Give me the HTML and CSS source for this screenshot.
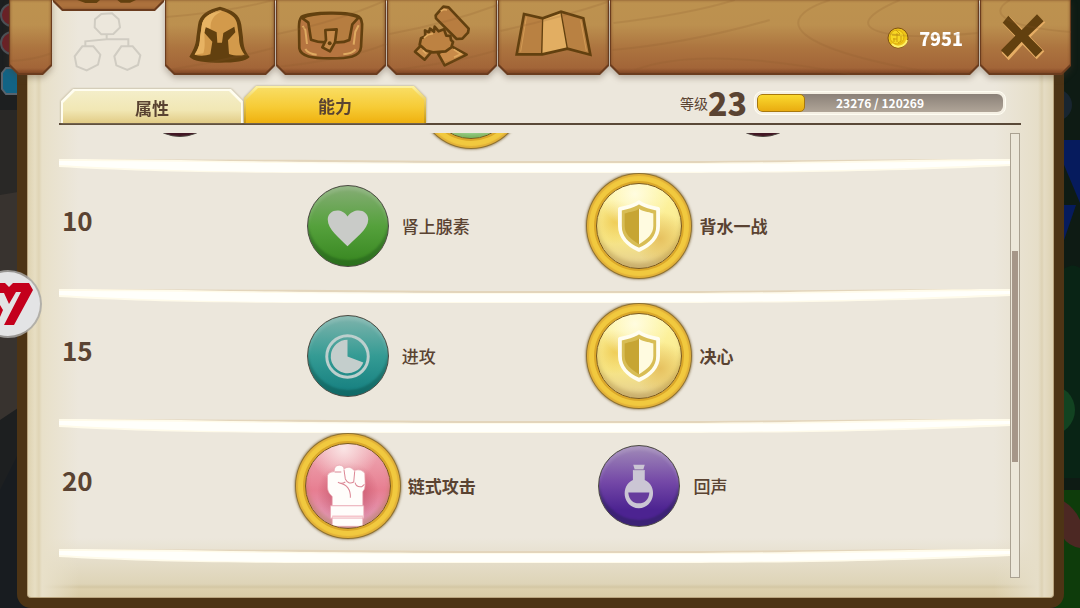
FILE: index.html
```html
<!DOCTYPE html>
<html lang="zh-CN">
<head>
    <meta charset="UTF-8">
    <meta name="viewport" content="width=device-width, initial-scale=1.0">
    <title>能力</title>
    <link rel="stylesheet" href="styles.css">
</head>
<body>

    <!-- Shared symbols -->
    <svg class="symbols" aria-hidden="true">
        <symbol id="ribbon" viewBox="0 0 952 16" preserveAspectRatio="none">
            <path d="M0 1C200 1 240 2 400 3H650C780 2 860 1 952 1" fill="none" stroke="#e3d5bb" stroke-width="2"/>
            <path d="M0 0C120 0 220 4 400 4H640C780 3 860 0 952 0V7C840 12 740 14 600 14H260C150 14 70 12 0 8Z" fill="#fffbea"/>
            <path d="M0 2C120 2 220 5 400 5H640C780 5 860 2 952 2V5C840 10 740 13 600 13H260C150 13 70 10 0 6Z" fill="#fffffb"/>
        </symbol>
        <symbol id="shield" viewBox="0 0 44 54">
            <path d="M22 2C16 7 9 7 2 9V27C2 38 10 47 22 52C34 47 42 38 42 27V9C35 7 28 7 22 2Z" fill="#d8bd55" stroke="#fffdf0" stroke-width="4" stroke-linejoin="round"/>
            <path d="M22 9C18 12 13 12 7 14V27C7 35 13 41 22 46Z" fill="#c7a533"/>
            <path d="M22 9C26 12 31 12 37 14V27C37 35 31 41 22 46Z" fill="#fffbe0"/>
        </symbol>
    </svg>

    <svg class="scene" viewBox="0 0 1080 608" preserveAspectRatio="none" aria-hidden="true">
        <rect width="1080" height="608" fill="#1d1f20"/>
        <path d="M0 110H30V195L0 200Z" fill="#292826"/>
        <path d="M0 195L30 190V400L0 420Z" fill="#38332f"/>
        <path d="M0 490L30 430V608H0Z" fill="#181c20"/>
        <circle cx="12" cy="15" r="11" fill="#6b2026" stroke="#4c5056" stroke-width="2"/>
        <circle cx="12" cy="43" r="11" fill="#6b2026" stroke="#4c5056" stroke-width="2"/>
        <path d="M6 68H24V94H6L2 89V73Z" fill="#126384" stroke="#59636d" stroke-width="2"/>
        <path d="M1055 0H1080V608H1055Z" fill="#0e1b14"/>
        <path d="M1062 140H1080V203L1062 160Z" fill="#061b5d"/>
        <path d="M1062 205H1076L1062 246Z" fill="#061b5d"/>
        <circle cx="1056" cy="105" r="16" fill="#182530"/>
        <path d="M1062 270Q1073 262 1080 268V478H1062Z" fill="#092415"/>
        <circle cx="1050" cy="410" r="25" fill="#124321"/>
        <path d="M1055 490H1080V608H1055Z" fill="#0e3c0b"/>
        <path d="M1062 500Q1075 508 1080 520V548Q1068 546 1062 536Z" fill="#4c2823"/>
    </svg>

    <div class="window">
        <nav class="planks" aria-label="菜单">
            <div class="plank plank-edge"></div>
            <div class="plank plank-active">
                <button type="button" aria-label="技能" aria-current="page">
                    <svg viewBox="159 0 333 225">
                        <path d="M232 0L256 9H290L300 0ZM352 0L362 8H390L408 0Z" fill="#62400f"/>
                        <g fill="none" stroke="#d0ccc2" stroke-width="6">
                            <path d="M304 42L336 40L356 58L360 82L340 102L304 103L284 82L285 58Z"/>
                            <path d="M247 139L280 139L301 164L294 194L260 211L230 199L224 169Z"/>
                            <path d="M364 139L398 139L421 166L414 195L382 210L349 196L343 169Z"/>
                            <path d="M320 104V120M256 138V124L320 118L385 118V138"/>
                        </g>
                    </svg>
                </button>
            </div>
            <div class="plank">
                <button type="button" aria-label="装备">
                    <svg viewBox="495 0 330 225">
                        <path d="M660 20C625 28 597 44 594 75L589 112C588 138 577 155 568 170C580 184 617 188 661 188C704 188 738 185 749 171C735 155 730 139 729 112L724 74C720 43 696 29 660 20Z" fill="#62400f"/>
                        <path d="M660 31C629 39 607 53 605 79L600 113C600 138 591 151 584 164C600 169 618 167 631 163L637 125L613 98L617 81L650 97L652 128H666L670 99L703 80L706 97L684 121L687 162C705 168 722 168 734 164C722 149 717 133 717 112L712 76C709 51 690 39 660 31Z" fill="#d39a4b"/>
                        <path d="M660 31C629 39 607 53 605 79L600 113C600 138 591 151 584 164L610 160C617 139 613 119 613 98L617 81L632 86C630 63 641 43 668 34Z" fill="#e7b363"/>
                    </svg>
                </button>
            </div>
            <div class="plank">
                <button type="button" aria-label="背包">
                    <svg viewBox="18 0 330 225">
                        <g stroke="#62400f" stroke-width="8" stroke-linejoin="round">
                            <path d="M94 51C121 35 239 34 266 50Q278 59 276 83L273 141C271 171 235 175 180 175C127 175 92 170 88 145L87 80Q87 60 94 51Z" fill="#b67540"/>
                            <path d="M96 54L115 68L123 119Q151 130 185 126Q218 130 238 120L247 73L266 52Q239 39 181 40Q122 40 96 54Z" fill="#b67d40"/>
                            <path d="M166 90L200 88L195 127L180 154L157 142L168 120Z" fill="#c58a4b"/>
                        </g>
                        <path d="M98 78L106 90L111 132M266 76L256 95L251 134M106 147Q114 161 140 164M257 148Q247 161 220 163" fill="none" stroke="#dfaa60" stroke-width="6"/>
                        <circle cx="179" cy="130" r="6" fill="#62400f"/>
                    </svg>
                </button>
            </div>
            <div class="plank">
                <button type="button" aria-label="制作">
                    <svg viewBox="351 0 330 225">
                        <g stroke="#62400f" stroke-width="8" stroke-linejoin="round">
                            <path d="M454 135L435 155L464 179L489 150Z" fill="#c98f4c"/>
                            <path d="M545 139L590 164L524 196L504 160Z" fill="#c98b49"/>
                            <path d="M494 80L506 94L522 88L529 107L541 108L543 120L549 126L544 142L527 154L489 157L469 152L449 134L453 115L466 109L465 91L477 97L480 86L492 95Z" fill="#bd8242"/>
                            <path d="M520 20L536 22L596 86L594 98L577 116L560 117L498 55L497 46Z" fill="#b87d40"/>
                        </g>
                        <path d="M462 114L474 104L489 101M551 148L573 162L552 172M458 151L469 161M512 34L522 28L531 30" fill="none" stroke="#e0aa60" stroke-width="5"/>
                    </svg>
                </button>
            </div>
            <div class="plank">
                <button type="button" aria-label="地图">
                    <svg viewBox="684 0 333 225">
                        <path d="M762 42L818 55L873 35L940 55L961 164L892 146L817 163L740 163Z" fill="#b98142"/>
                        <path d="M818 55L873 35L892 146L817 163Z" fill="#e2ae62"/>
                        <path d="M762 42L818 55L873 35L940 55L961 164L892 146L817 163L740 163Z" fill="none" stroke="#62400f" stroke-width="8"/>
                        <path d="M818 55L815 163M873 37L892 146" stroke="#62400f" stroke-width="4"/>
                        <path d="M769 52L752 155M932 61L949 153" stroke="#d39b54" stroke-width="3"/>
                    </svg>
                </button>
            </div>
            <div class="plank plank-purse">
                <div class="purse">
                    <svg class="coin" viewBox="0 0 22 24" aria-hidden="true">
                        <circle cx="11" cy="12" r="10" fill="#efc719" stroke="#82530f"/>
                        <path d="M5 18A9 9 0 0 0 20 14" fill="none" stroke="#fff06a" stroke-width="2"/>
                        <circle cx="10" cy="11" r="7" fill="#f7d723" stroke="#dcab10"/>
                        <path d="M9 4L13 8M5 9H13M7 12V16M10 7V16M14 10V15L11 17M6 13H10" fill="none" stroke="#cf9f0e" stroke-width="1"/>
                    </svg>
                    <span>7951</span>
                </div>
            </div>
            <div class="plank plank-close">
                <button type="button" aria-label="关闭">
                    <svg viewBox="1140 0 273 225">
                        <path d="M1228 49L1268 88L1310 46L1336 67L1292 111L1333 154L1310 178L1268 134L1226 181L1205 158L1246 111L1209 71Z" fill="#e6ad64"/>
                        <path d="M1225 47L1265 90L1311 43L1331 64L1285 107L1328 151L1307 171L1265 125L1223 171L1203 151L1246 107L1208 68Z" fill="#62400f"/>
                    </svg>
                </button>
            </div>
            <svg class="grain" viewBox="0 0 1061 75" preserveAspectRatio="none" aria-hidden="true">
                <path d="M2 61Q25 60 43 53M157 17Q220 12 264 0M159 70Q215 61 264 48M268 34Q330 21 377 0M268 67Q340 59 377 44M380 34Q440 23 488 5M385 70Q450 62 488 50M491 31Q550 18 598 2M604 23Q680 14 725 0M603 50Q680 43 760 20M625 70Q690 45 840 74M820 0C760 20 780 49 930 74M890 0C820 30 875 42 968 33M1000 0C975 15 1000 27 1061 32"/>
            </svg>
        </nav>

        <main class="book">
            <header class="book-header">
                <div class="tabs" role="tablist">
                    <button class="tab" type="button" role="tab" aria-selected="false"><span>属性</span></button>
                    <button class="tab tab-selected" type="button" role="tab" aria-selected="true"><span>能力</span></button>
                </div>
                <div class="level">
                    <label class="level-label" for="experience">等级</label>
                    <strong class="level-value">23</strong>
                    <div class="experience">
                        <progress id="experience" value="23276" max="120269"></progress>
                        <span>23276 / 120269</span>
                    </div>
                </div>
            </header>

            <div class="content">
                <div class="ability-list">
                    <section class="row row-three">
                        <button class="ability" type="button" aria-label="能力"><span class="medal maroon"></span></button>
                        <button class="ability chosen" type="button" aria-label="能力"><span class="medal lime"></span></button>
                        <button class="ability" type="button" aria-label="能力"><span class="medal maroon"></span></button>
                    </section>

                    <section class="row">
                        <svg class="ribbon"><use href="#ribbon"/></svg>
                        <h2>10</h2>
                        <button class="ability" type="button">
                            <span class="medal green">
                                <svg viewBox="0 0 81 81">
                                    <path d="M40 61C32 53 20 44 20 34C20 24 34 21 40 31C47 21 61 24 61 34C61 44 48 53 40 61Z" fill="#c9cbc8"/>
                                </svg>
                            </span>
                            <span>肾上腺素</span>
                        </button>
                        <button class="ability chosen" type="button">
                            <span class="medal gold"><svg class="shield"><use href="#shield"/></svg></span>
                            <span>背水一战</span>
                        </button>
                    </section>

                    <section class="row">
                        <svg class="ribbon"><use href="#ribbon"/></svg>
                        <h2>15</h2>
                        <button class="ability" type="button">
                            <span class="medal teal">
                                <svg viewBox="0 0 81 81">
                                    <circle cx="40" cy="41" r="21" fill="none" stroke="#bccfcd" stroke-width="3"/>
                                    <path d="M40 24A17 17 0 1 0 56 47L40 41Z" fill="#c4cecc"/>
                                </svg>
                            </span>
                            <span>进攻</span>
                        </button>
                        <button class="ability chosen" type="button">
                            <span class="medal gold"><svg class="shield"><use href="#shield"/></svg></span>
                            <span>决心</span>
                        </button>
                    </section>

                    <section class="row">
                        <svg class="ribbon"><use href="#ribbon"/></svg>
                        <h2>20</h2>
                        <button class="ability chosen" type="button">
                            <span class="medal pink">
                                <svg viewBox="82 102 250 250">
                                    <g fill="#fffdfb" stroke="#e9a4ae" stroke-width="2">
                                        <path d="M166 184Q165 166 181 165Q194 166 195 176Q213 164 225 181Q248 174 257 190L258 224Q258 237 251 244V286H160V258Q146 247 146 230V195Q151 184 166 184Z"/>
                                        <path d="M155 286H254V323H155ZM160 319H251V347H160Z"/>
                                    </g>
                                    <path d="M167 185H187M195 178L199 206Q208 224 224 215L227 183M228 217Q232 232 248 229L256 222M177 216Q188 222 199 215M181 218Q216 225 214 262" fill="none" stroke="#dc8795" stroke-width="3"/>
                                    <path d="M160 317H252" stroke="#f6c6cc" stroke-width="4"/>
                                </svg>
                            </span>
                            <span>链式攻击</span>
                        </button>
                        <button class="ability" type="button">
                            <span class="medal purple">
                                <svg viewBox="60 78 243 243">
                                    <path d="M164 135H199L195 148V151H199V181C238 197 232 264 181 267C130 264 125 197 163 181V151H168V148Z" fill="#cbc6d4"/>
                                    <path d="M149 219H213C211 242 198 252 181 252C164 252 151 242 149 219Z" fill="#673c9d"/>
                                    <path d="M165 150H197" stroke="#907aaa" stroke-width="3"/>
                                </svg>
                            </span>
                            <span>回声</span>
                        </button>
                    </section>

                    <svg class="ribbon ribbon-last"><use href="#ribbon"/></svg>
                </div>
                <div class="scrollbar"><div class="thumb"></div></div>
            </div>
        </main>
    </div>

    <button class="badge" type="button" aria-label="悬浮球">
        <svg viewBox="0 0 44 72">
            <circle cx="8" cy="36" r="34" fill="#a9a8a5" fill-opacity="0.85"/>
            <circle cx="8" cy="36" r="32" fill="#e3e4e5"/>
            <path d="M0 15H5L9 19L13 15H29L33 22L14 57H4L21 24H16L9 36L4 25H0ZM0 37L3 42L0 49Z" fill="#c4001c"/>
        </svg>
    </button>

</body>
</html>
```

FILE: styles.css
```css
* {
    box-sizing: border-box;
}

body {
    margin: 0;
    font-family: "Noto Sans CJK SC", sans-serif;
    color: #5a4332;
    background-color: #1d1f20;
    overflow: hidden;
}

button {
    font: inherit;
    color: inherit;
    margin: 0;
    padding: 0;
    border: none;
    background: none;
    cursor: pointer;
}

svg {
    display: block;
}

.symbols {
    position: absolute;
    width: 0;
    height: 0;
}

.scene {
    position: absolute;
    inset: 0;
    width: 100%;
    height: 100%;
}

.window {
    position: relative;
    display: flex;
    flex-direction: column;
    height: 100vh;
    margin: 0 9px;
}

/* --- Wooden menu --- */
.planks {
    position: relative;
    z-index: 2;
    display: grid;
    grid-template-columns: 43px 111px 110px 110px 110px 111px minmax(0, 1fr) 91px;
    gap: 1px;
    height: 75px;
}

.plank {
    position: relative;
    filter: drop-shadow(0 3px 3px rgba(80, 60, 40, 0.35));
}

.plank::before,
.plank::after {
    content: "";
    position: absolute;
    inset: 0;
    background: #6b3c1e;
    clip-path: polygon(0 0, 100% 0, 100% calc(100% - 9px), calc(100% - 9px) 100%, 9px 100%, 0 calc(100% - 9px));
}

.plank::after {
    inset: 0 1px 2px;
    background: linear-gradient(#bd924f 0, #bc904f 25px, #ac743f 48px, #a26538 68px, #874a27 100%);
    box-shadow: inset 0 0 3px #7b4826;
}

.plank button {
    position: relative;
    z-index: 1;
    display: block;
    width: 100%;
    height: 75px;
}

.plank button svg {
    width: 100%;
    height: 75px;
}

.plank-active {
    height: 11px;
    filter: none;
}

.plank-active::after {
    background: #ac713d;
}

.plank-purse {
    display: flex;
    align-items: center;
    justify-content: flex-end;
    padding-right: 16px;
}

.purse {
    position: relative;
    z-index: 1;
    display: flex;
    align-items: center;
    gap: 10px;
    color: #fff;
    font-size: 18px;
    font-weight: 900;
    line-height: 24px;
}

.coin {
    width: 22px;
    height: 24px;
}

.grain {
    position: absolute;
    inset: 0;
    z-index: 1;
    width: 100%;
    height: 100%;
    pointer-events: none;
    fill: none;
    stroke: #8a5a2c;
    stroke-width: 2;
    opacity: 0.18;
}

/* --- Book page --- */
.book {
    position: relative;
    flex: 1;
    display: flex;
    flex-direction: column;
    min-height: 0;
    margin: -75px 7px 0 8px;
    padding: 85px 33px 20px 32px;
    border: solid #4d3415;
    border-width: 0 10px 10px;
    border-radius: 0 0 14px 14px;
    box-shadow: inset 0 0 0 1px #b9a47e;
    background:
        linear-gradient(90deg, #ddd1af 0, #e7dec3 8px, #dfd4b5 12px, #e8e0c9 15px, rgba(236, 230, 216, 0) 52px),
        linear-gradient(270deg, #ddd1b0 0, #e5dcc4 10px, #ddd2b4 12px, #e6dec8 16px, rgba(236, 230, 216, 0) 60px),
        linear-gradient(0deg, #d9cca6 0, #ddd0ad 9px, #d4c7a4 11px, #ded4b7 14px, rgba(236, 230, 216, 0) 60px);
    background-clip: padding-box;
    background-color: #ece7dc;
}

.book-header {
    display: flex;
    align-items: flex-end;
    justify-content: space-between;
    height: 40px;
    padding: 0 15px 0 2px;
    border-bottom: 2px solid #5a4938;
}

.tabs {
    display: flex;
    align-items: flex-end;
    gap: 1px;
}

.tab {
    position: relative;
    z-index: 0;
    width: 182px;
    height: 34px;
    padding-top: 3px;
    font-size: 17px;
    font-weight: 700;
    line-height: 24px;
    filter: drop-shadow(0 0 1px #a99c77);
}

.tab::before,
.tab::after {
    content: "";
    position: absolute;
    inset: 0;
    z-index: -1;
    background: #fffdf0;
    clip-path: polygon(0 100%, 0 12px, 12px 0, calc(100% - 12px) 0, 100% 12px, 100% 100%);
}

.tab::after {
    inset: 2px 2px 0;
    background: linear-gradient(#f4eec9, #f1e7b4 60%, #e2cc86);
}

.tab-selected {
    height: 37px;
}

.tab-selected::before {
    background: linear-gradient(#fff3a0, #c9980f);
}

.tab-selected::after {
    background: linear-gradient(#f9dd63, #f6cb35 55%, #efb10f);
}

.level {
    display: flex;
    align-items: center;
    height: 40px;
}

.level-label {
    font-size: 14px;
    line-height: 20px;
}

.level-value {
    font-size: 32px;
    font-weight: 900;
    line-height: 36px;
    padding-bottom: 2px;
}

.experience {
    position: relative;
    width: 252px;
    height: 24px;
    margin-left: 7px;
    padding: 2px;
    border: 1px solid #fffdf2;
    border-radius: 8px;
    background: #f5f0e4;
}

.experience progress {
    display: block;
    width: 100%;
    height: 18px;
    appearance: none;
    border: none;
    border-radius: 6px;
    background: #a0958a;
    overflow: hidden;
}

.experience progress::-webkit-progress-bar {
    background: linear-gradient(#8b8178, #b0a598);
}

.experience progress::-webkit-progress-value {
    border: 1px solid #a8780c;
    border-radius: 5px;
    background: linear-gradient(#fad92f, #e9ac10);
}

.experience span {
    position: absolute;
    inset: 0;
    color: #fff;
    font-size: 12px;
    font-weight: 700;
    line-height: 22px;
    text-align: center;
}

/* --- Ability list --- */
.content {
    flex: 1;
    display: flex;
    min-height: 0;
    padding: 8px 1px 0 0;
}

.ability-list {
    position: relative;
    flex: 1;
    display: flex;
    flex-direction: column;
    justify-content: flex-end;
    min-width: 0;
    overflow: hidden;
}

.row {
    position: relative;
    flex: none;
    display: grid;
    grid-template-columns: minmax(0, 235fr) minmax(0, 292fr) minmax(0, 292fr) minmax(0, 133fr);
    align-items: center;
    height: 130px;
    padding-top: 3px;
}

.row-three {
    grid-template-columns: repeat(3, minmax(0, 292fr)) minmax(0, 9fr);
    padding-left: 7%;
}

.ribbon {
    position: absolute;
    top: 0;
    left: 0;
    width: 100%;
    height: 16px;
}

.ribbon-last {
    position: static;
    flex: none;
    margin-bottom: 13px;
}

.row h2 {
    margin: 0;
    padding: 0 0 12px 3px;
    font-size: 26px;
    font-weight: 700;
    line-height: 32px;
}

.ability {
    display: flex;
    align-items: center;
    gap: 13px;
    height: 108px;
    padding-left: 13px;
    font-size: 17px;
    font-weight: 500;
    line-height: 24px;
    text-align: left;
}

.ability.chosen {
    gap: 6px;
    padding-left: 0;
    font-weight: 700;
}

.medal {
    flex: none;
    display: flex;
    align-items: center;
    justify-content: center;
    width: 82px;
    height: 82px;
    border: 1px solid #4b4a42;
    border-radius: 50%;
    box-shadow: inset 0 -6px 2px rgba(0, 30, 20, 0.22), inset 0 4px 3px rgba(255, 255, 255, 0.12);
}

.medal svg {
    width: 100%;
    height: 100%;
}

.medal .shield {
    width: 42px;
    height: 52px;
}

.chosen .medal {
    width: 86px;
    height: 86px;
    margin: 11px;
    border: 1px solid #7b5718;
    box-shadow:
        0 0 0 2px #dba82a,
        0 0 1px 7px #f1c93f,
        0 0 0 9px #e2b138,
        0 0 0 10px #8d7030,
        0 0 2px 11px rgba(120, 95, 50, 0.5),
        inset 0 -5px 4px rgba(150, 115, 45, 0.35);
}

.maroon { background: #551529; }
.lime { background: linear-gradient(#dfffe0 85%, #67d878); }
.green { background: linear-gradient(#86ad76, #55a13c 50%, #36851f); }
.teal { background: linear-gradient(#7fb4ac, #349b94 50%, #137d7e); }
.purple { background: linear-gradient(#a18bb8, #7448a7 45%, #4c2391 80%); }

.gold {
    background:
        radial-gradient(circle at 45% 12%, #fffce0, rgba(255, 252, 224, 0) 40%),
        radial-gradient(circle at 75% 65%, #e6c160, rgba(230, 193, 96, 0) 32%),
        radial-gradient(circle at 22% 45%, #efcd58, rgba(239, 205, 88, 0) 28%),
        linear-gradient(#fff7a8, #f8e787 65%, #e5cf91);
}

.pink {
    overflow: hidden;
    background:
        radial-gradient(circle at 45% 5%, #fae5e5, rgba(250, 229, 229, 0) 38%),
        radial-gradient(circle at 50% 58%, #bd4b61, rgba(189, 75, 97, 0) 48%),
        linear-gradient(#efacb5, #e77e91 55%, #e1a0c1);
}

/* --- Scrollbar --- */
.scrollbar {
    flex: none;
    display: flex;
    flex-direction: column;
    width: 10px;
    padding: 1px;
    border: 1px solid #aaa191;
    background: #ece7d9;
}

/* The thumb keeps a share of the track height */
.scrollbar::before {
    content: "";
    flex: 117;
}

.scrollbar::after {
    content: "";
    flex: 115;
}

.thumb {
    flex: 212;
    background: #a69789;
}

/* --- Floating badge --- */
.badge {
    position: absolute;
    top: 50%;
    left: 0;
    z-index: 3;
    width: 44px;
    height: 72px;
    transform: translateY(-50%);
}

.badge svg {
    width: 44px;
    height: 72px;
}
```
